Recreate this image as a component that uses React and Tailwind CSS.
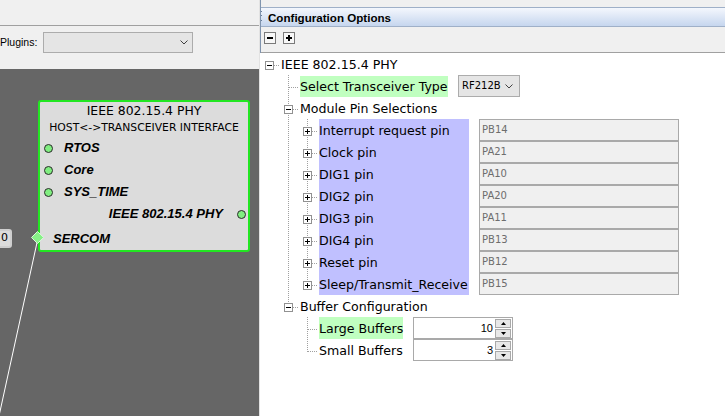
import React from 'react';

const PINS = [
  ['Interrupt request pin', 'PB14'],
  ['Clock pin', 'PA21'],
  ['DIG1 pin', 'PA10'],
  ['DIG2 pin', 'PA20'],
  ['DIG3 pin', 'PA11'],
  ['DIG4 pin', 'PB13'],
  ['Reset pin', 'PB12'],
  ['Sleep/Transmit_Receive', 'PB15'],
];

// one indent column of the tree: dotted guide lines and an optional +/- box
const Guide = ({ line, expander }) => (
  <svg width="19" height="22" className="shrink-0" shapeRendering="crispEdges">
    {(line === 'pipe' || line === 'tee') && (
      <line x1="9.5" y1="0" x2="9.5" y2="22" stroke="#a0a0a0" strokeDasharray="1 1" />
    )}
    {line === 'elbow' && <line x1="9.5" y1="0" x2="9.5" y2="13" stroke="#a0a0a0" strokeDasharray="1 1" />}
    {(line === 'tee' || line === 'elbow' || expander) && (
      <line x1="10" y1="12.5" x2="19" y2="12.5" stroke="#a0a0a0" strokeDasharray="1 1" />
    )}
    {expander && (
      <>
        <rect x="5.5" y="8.5" width="8" height="8" fill="#ffffff" stroke="#919191" />
        <rect x="7" y="12" width="5" height="1" fill="#000000" />
        {expander === 'closed' && <rect x="9" y="10" width="1" height="5" fill="#000000" />}
      </>
    )}
  </svg>
);

const Row = ({ children }) => <div className="flex h-[22px] items-center">{children}</div>;

const Port = () => <span className="h-[9px] w-[9px] shrink-0 rounded-full border border-[#2b2b2b] bg-[#80ee80]" />;

const Spinner = ({ value }) => (
  <div className="ml-[10px] flex h-[22px] w-[100px] shrink-0 items-center border border-[#a9a9a9] bg-white">
    <span className="flex-1 pr-[2px] text-right font-['Liberation_Sans',sans-serif] text-[11px] text-black">{value}</span>
    <div className="mr-px flex flex-col gap-px">
      <span className="flex h-[9px] w-[16px] items-center justify-center border border-[#a9a9a9] bg-[#e8e8e8]">
        <svg width="5" height="3"><polygon points="2.5,0 5,3 0,3" fill="#000" /></svg>
      </span>
      <span className="flex h-[9px] w-[16px] items-center justify-center border border-[#a9a9a9] bg-[#e8e8e8]">
        <svg width="5" height="3"><polygon points="0,0 5,0 2.5,3" fill="#000" /></svg>
      </span>
    </div>
  </div>
);

const Chevron = () => (
  <svg width="8" height="5" viewBox="0 0 8 5">
    <polyline points="0.5,0.5 4,4 7.5,0.5" fill="none" stroke="#404040" strokeWidth="1" />
  </svg>
);

export default function App() {
  return (
    <div className="flex h-[416px] w-[725px] overflow-hidden bg-[#f0f0f0] font-['DejaVu_Sans',sans-serif]">
      {/* Composer canvas */}
      <div className="flex w-[259px] shrink-0 flex-col">
        <div className="h-[26px] border-b border-[#a0a0a0] bg-[#f0f0f0]" />
        <div className="flex h-[43px] items-start bg-[#f0f0f0] pt-[6px]">
          <span className="flex h-[21px] w-[43px] items-center font-['Liberation_Sans',sans-serif] text-[10.5px] text-black">
            Plugins:
          </span>
          <div className="flex h-[21px] w-[150px] items-center justify-end border border-[#acacac] bg-[#e5e5e5] pr-[4px]">
            <Chevron />
          </div>
        </div>
        <div className="relative flex-1 overflow-hidden bg-[#666666]">
          <svg className="absolute left-0 top-0" width="259" height="347">
            <line x1="38" y1="169" x2="-1" y2="347" stroke="#ffffff" strokeWidth="1" />
          </svg>
          <div className="absolute -left-[22px] top-[160px] flex h-[19px] w-[34px] items-center justify-end rounded-[3px] border-2 border-[#cfcfcf] bg-[#dcdcdc] pr-[2px] text-[11px] text-black">
            0
          </div>
          <div className="absolute left-[38px] top-[31px] flex h-[152px] w-[212px] flex-col rounded-[3px] border-2 border-[#22e622] bg-[#dcdcdc] whitespace-nowrap">
            <div className="flex h-[18px] items-center justify-center text-[12.4px] text-black">IEEE 802.15.4 PHY</div>
            <div className="flex h-[17px] items-center justify-center text-[10.8px] text-black">HOST&lt;-&gt;TRANSCEIVER INTERFACE</div>
            {['RTOS', 'Core', 'SYS_TIME'].map((name) => (
              <div key={name} className="flex h-[22px] items-center pl-[4px]">
                <Port />
                <span className="ml-[11px] font-['Liberation_Sans',sans-serif] text-[13px] font-bold italic text-black">{name}</span>
              </div>
            ))}
            <div className="flex h-[22px] items-center justify-end pr-[2px]">
              <span className="font-['Liberation_Sans',sans-serif] text-[13px] font-bold italic text-black">IEEE 802.15.4 PHY</span>
              <span className="ml-[14px] flex"><Port /></span>
            </div>
            <div className="relative flex h-[25px] items-center pl-[13px] pt-[2px]">
              <svg className="absolute -left-[9px] top-[6px]" width="13" height="13">
                <polygon points="6.5,0.5 12.5,6.5 6.5,12.5 0.5,6.5" fill="#88f088" stroke="#d8f8d8" />
              </svg>
              <span className="font-['Liberation_Sans',sans-serif] text-[13px] font-bold italic text-black">SERCOM</span>
            </div>
          </div>
        </div>
      </div>

      {/* Splitter */}
      <div className="w-[2px] shrink-0 border-l border-[#e2e2e2] bg-[#8094ae]" />

      {/* Configuration Options */}
      <div className="flex min-w-0 flex-1 flex-col">
        <div className="h-[7px] bg-[#f0f0f0]" />
        <div className="flex h-[20px] items-center border-y border-[#9fb0c8] bg-linear-to-b from-[#f4f7fd] to-[#c6d6ee]">
          <div className="grid h-[12px] w-[4px] grid-cols-2 gap-px">
            {[0, 1, 2, 3, 4, 5].map((i) => (
              <span key={i} className={i % 2 === 0 ? 'h-px w-px bg-[#6a7f9c]' : 'h-px w-px'} />
            ))}
          </div>
          <span className="ml-[3px] pt-px font-['Liberation_Sans',sans-serif] text-[11.6px] font-bold text-black">Configuration Options</span>
        </div>
        <div className="flex h-[26px] items-start gap-[7px] border-b border-[#a0a0a0] bg-[#f0f0f0] pl-[3px] pt-[5px]">
          <span className="flex h-[12px] w-[12px] items-center justify-center border border-[#7a7a7a] bg-[#f7f7f7]">
            <span className="h-[2px] w-[6px] bg-black" />
          </span>
          <span className="relative flex h-[12px] w-[12px] items-center justify-center border border-[#7a7a7a] bg-[#f7f7f7]">
            <span className="h-[2px] w-[6px] bg-black" />
            <span className="absolute h-[6px] w-[2px] bg-black" />
          </span>
        </div>

        <div className="-ml-px flex flex-1 flex-col whitespace-nowrap bg-white text-[12.6px] leading-none text-black">
          <Row>
            <Guide expander="open" />
            <span className="ml-[2px] pt-[3px]">IEEE 802.15.4 PHY</span>
          </Row>
          <Row>
            <Guide />
            <Guide line="tee" />
            <span className="ml-[2px] flex h-[21px] w-[148px] shrink-0 items-center bg-[#c0ffc0] pt-[3px]">Select Transceiver Type</span>
            <div className="ml-[10px] flex h-[22px] w-[62px] shrink-0 items-center justify-between border border-[#acacac] bg-[#e5e5e5] pl-[3px] pr-[6px]">
              <span className="text-[10px]">RF212B</span>
              <Chevron />
            </div>
          </Row>
          <Row>
            <Guide />
            <Guide line="tee" expander="open" />
            <span className="ml-[2px] pt-[3px]">Module Pin Selections</span>
          </Row>
          {PINS.map(([label, pin], i) => (
            <Row key={label}>
              <Guide />
              <Guide line="pipe" />
              <Guide line={i === PINS.length - 1 ? 'elbow' : 'tee'} expander="closed" />
              <span className="ml-[2px] flex h-[22px] w-[150px] shrink-0 items-center bg-[#c0c0ff] pt-[3px]">{label}</span>
              <div className="ml-[10px] flex h-[22px] w-[200px] shrink-0 items-center border border-[#a9a9a9] bg-[#f0f0f0] pl-[2px] text-[10px] text-[#6d6d6d]">
                {pin}
              </div>
            </Row>
          ))}
          <Row>
            <Guide />
            <Guide line="elbow" expander="open" />
            <span className="ml-[2px] pt-[3px]">Buffer Configuration</span>
          </Row>
          <Row>
            <Guide />
            <Guide />
            <Guide line="tee" />
            <span className="ml-[2px] flex h-[22px] w-[84px] shrink-0 items-center bg-[#c0ffc0] pt-[3px]">Large Buffers</span>
            <Spinner value="10" />
          </Row>
          <Row>
            <Guide />
            <Guide />
            <Guide line="elbow" />
            <span className="ml-[2px] flex h-[22px] w-[84px] shrink-0 items-center pt-[3px]">Small Buffers</span>
            <Spinner value="3" />
          </Row>
        </div>
      </div>
    </div>
  );
}
